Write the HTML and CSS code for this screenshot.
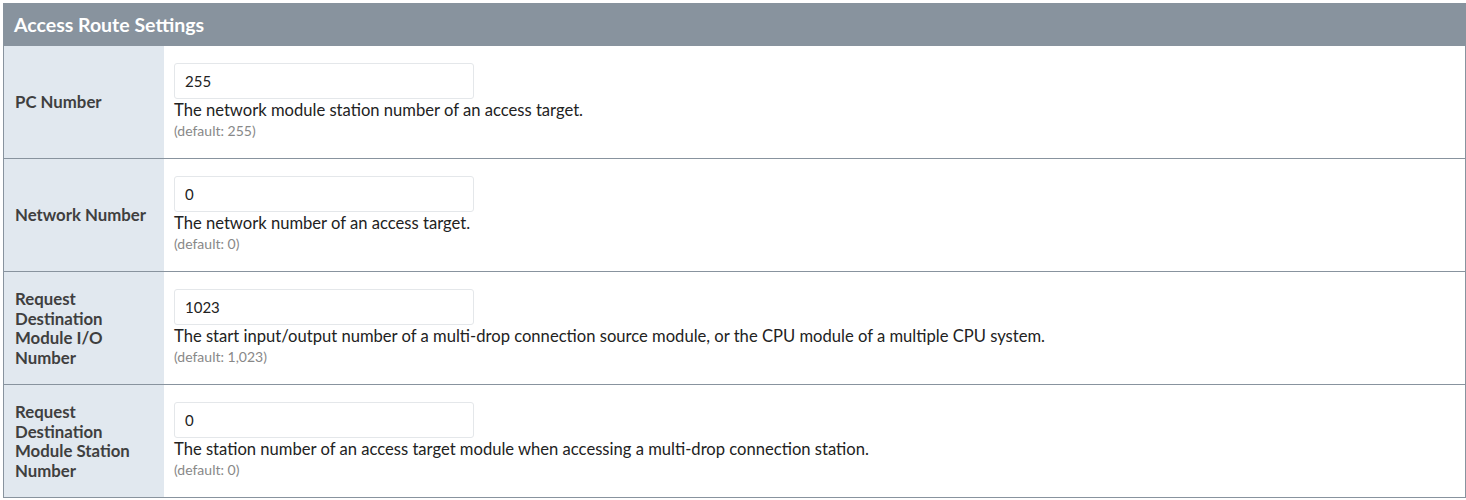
FILE: index.html
```html
<!DOCTYPE html>
<html>
<head>
<meta charset="utf-8">
<link rel="stylesheet" href="styles.css">
</head>
<body>
<div class="panel">
  <div class="panel-head">Access Route Settings</div>
  <div class="row">
    <div class="label">PC Number</div>
    <div class="field">
      <div class="input">255</div>
      <div class="desc">The network module station number of an access target.</div>
      <div class="def">(default: 255)</div>
    </div>
  </div>
  <div class="row">
    <div class="label">Network Number</div>
    <div class="field">
      <div class="input">0</div>
      <div class="desc">The network number of an access target.</div>
      <div class="def">(default: 0)</div>
    </div>
  </div>
  <div class="row">
    <div class="label">Request Destination Module I/O Number</div>
    <div class="field">
      <div class="input">1023</div>
      <div class="desc">The start input/output number of a multi-drop connection source module, or the CPU module of a multiple CPU system.</div>
      <div class="def">(default: 1,023)</div>
    </div>
  </div>
  <div class="row">
    <div class="label">Request Destination Module Station Number</div>
    <div class="field">
      <div class="input">0</div>
      <div class="desc">The station number of an access target module when accessing a multi-drop connection station.</div>
      <div class="def">(default: 0)</div>
    </div>
  </div>
</div>
</body>
</html>
```
FILE: styles.css
```css
body {
  margin: 3px 0 0 3px;
  font-family: Lato, "Open Sans", sans-serif;
  background: #fff;
}
.panel {
  width: 1461px;
  border: 1px solid #88939e;
  border-top: none;
}
.panel-head {
  background: #88939e;
  color: #fff;
  font-weight: 700;
  font-size: 19.5px;
  height: 43px;
  line-height: 43px;
  padding-left: 11px;
  margin: 0 -1px;
}
.row {
  display: flex;
  border-bottom: 1px solid #88939e;
}
.row:last-child {
  border-bottom: none;
}
.label {
  width: 136px;
  flex: none;
  background: #e1e8ef;
  padding: 0 13px 0 11px;
  display: flex;
  align-items: center;
  font-weight: 700;
  font-size: 16.8px;
  line-height: 19.5px;
  color: #3f3f3f;
}
.field {
  flex: 1;
  padding: 17px 10px 17px 10px;
}
.input {
  width: 288px;
  height: 34px;
  border: 1px solid #e4e7ea;
  border-radius: 3px;
  padding-left: 10px;
  font-size: 15px;
  line-height: 34px;
  color: #222;
}
.desc {
  font-size: 16.6px;
  line-height: 22px;
  color: #222;
}
.def {
  font-size: 14px;
  line-height: 20px;
  color: #888;
}
```
